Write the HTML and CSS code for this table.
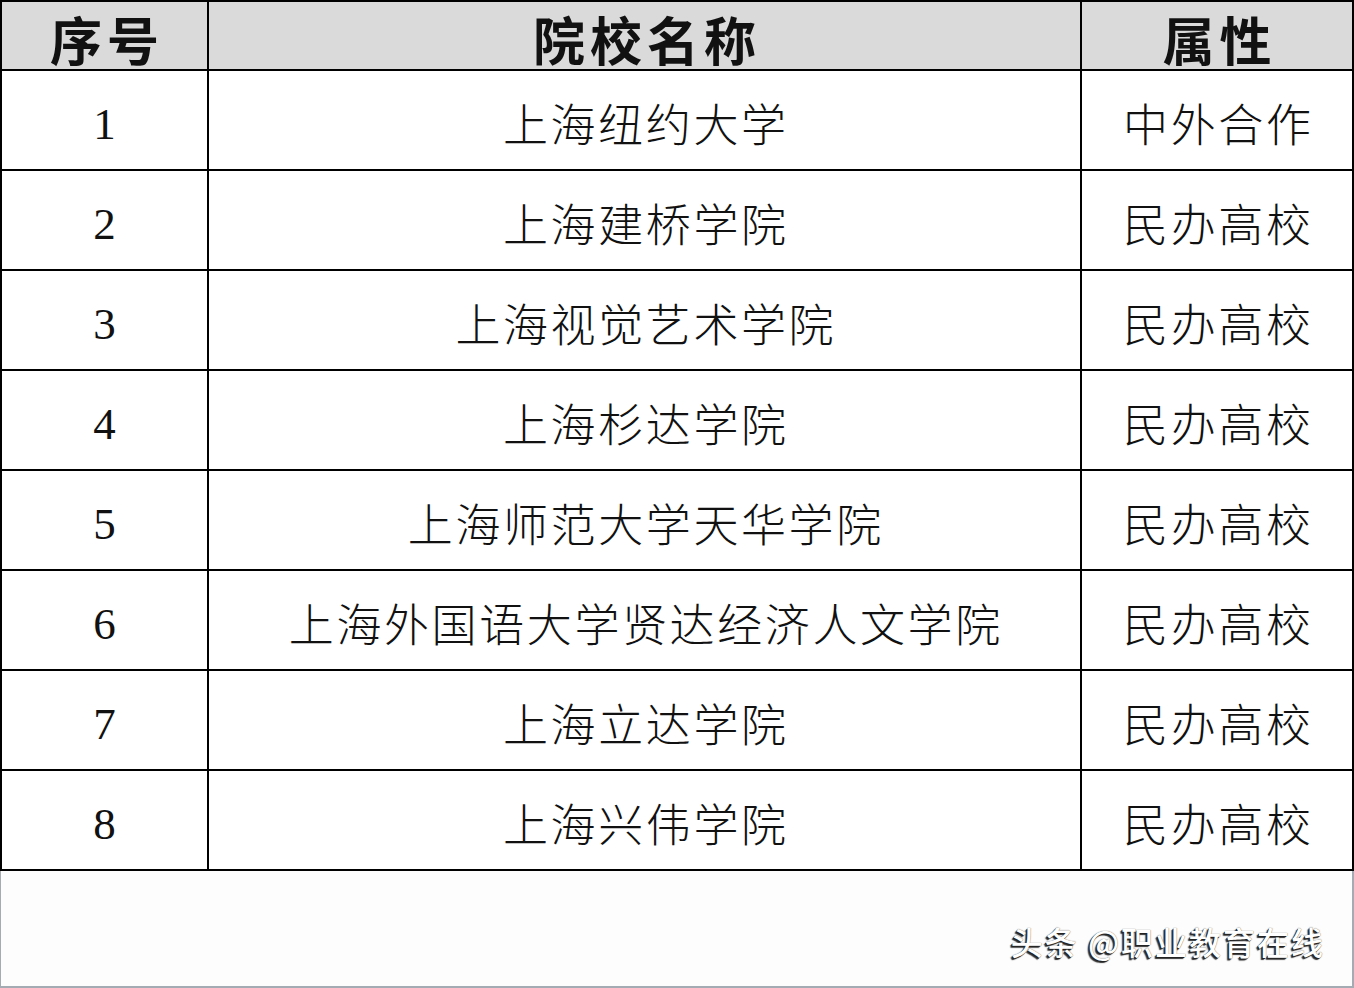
FILE: index.html
```html
<!DOCTYPE html>
<html lang="zh-CN">
<head>
<meta charset="utf-8">
<title>上海民办高校</title>
<link rel="stylesheet" href="styles.css">
</head>
<body>
<div class="page">
  <div class="grid">
    <div class="cell head">序号</div>
    <div class="cell head">院校名称</div>
    <div class="cell head">属性</div>

    <div class="cell num">1</div>
    <div class="cell name">上海纽约大学</div>
    <div class="cell name">中外合作</div>

    <div class="cell num">2</div>
    <div class="cell name">上海建桥学院</div>
    <div class="cell name">民办高校</div>

    <div class="cell num">3</div>
    <div class="cell name">上海视觉艺术学院</div>
    <div class="cell name">民办高校</div>

    <div class="cell num">4</div>
    <div class="cell name">上海杉达学院</div>
    <div class="cell name">民办高校</div>

    <div class="cell num">5</div>
    <div class="cell name">上海师范大学天华学院</div>
    <div class="cell name">民办高校</div>

    <div class="cell num">6</div>
    <div class="cell name">上海外国语大学贤达经济人文学院</div>
    <div class="cell name">民办高校</div>

    <div class="cell num">7</div>
    <div class="cell name">上海立达学院</div>
    <div class="cell name">民办高校</div>

    <div class="cell num">8</div>
    <div class="cell name">上海兴伟学院</div>
    <div class="cell name">民办高校</div>
  </div>
  <div class="footer">
    <span class="mark">头条 @职业教育在线</span>
  </div>
</div>
</body>
</html>
```

FILE: styles.css
```css
html, body {
  margin: 0;
  padding: 0;
  background: #ffffff;
}

.page {
  width: 1354px;
  height: 988px;
  display: flex;
  flex-direction: column;
  overflow: hidden;
}

.grid {
  display: grid;
  grid-template-columns: 205px 871px 270px;
  grid-template-rows: 67px repeat(8, 98px);
  gap: 2px;
  padding: 2px;
  background: #000000;
  width: 1354px;
  box-sizing: border-box;
}

.cell {
  background: #ffffff;
  display: flex;
  align-items: center;
  justify-content: center;
  color: #111111;
}

.head {
  background: #dadada;
  font-family: "Noto Sans CJK SC", sans-serif;
  font-weight: 700;
  font-size: 52px;
  letter-spacing: 5px;
  text-indent: 5px;
  padding-top: 6px;
  box-sizing: border-box;
}

.num {
  font-family: "Liberation Serif", serif;
  font-size: 45px;
  padding-top: 8px;
  box-sizing: border-box;
}

.name {
  font-family: "Noto Sans CJK SC", sans-serif;
  font-weight: 300;
  font-size: 45px;
  letter-spacing: 2.6px;
  text-indent: 2.6px;
  padding-top: 4px;
  box-sizing: border-box;
}

.footer {
  flex: 1;
  background: #fdfdfd;
  border-left: 1px solid #a4abb2;
  border-right: 2px solid #a4abb2;
  border-bottom: 2px solid #a4abb2;
  display: flex;
  justify-content: flex-end;
  align-items: flex-end;
  padding: 0 27px 22px 0;
}

.mark {
  font-family: "Noto Sans CJK SC", sans-serif;
  font-size: 32px;
  font-weight: 500;
  color: #ffffff;
  letter-spacing: 2px;
  text-shadow: -1px 1px 0 #222, -2px 2px 1px #333, 0 0 1px #444;
}
```
